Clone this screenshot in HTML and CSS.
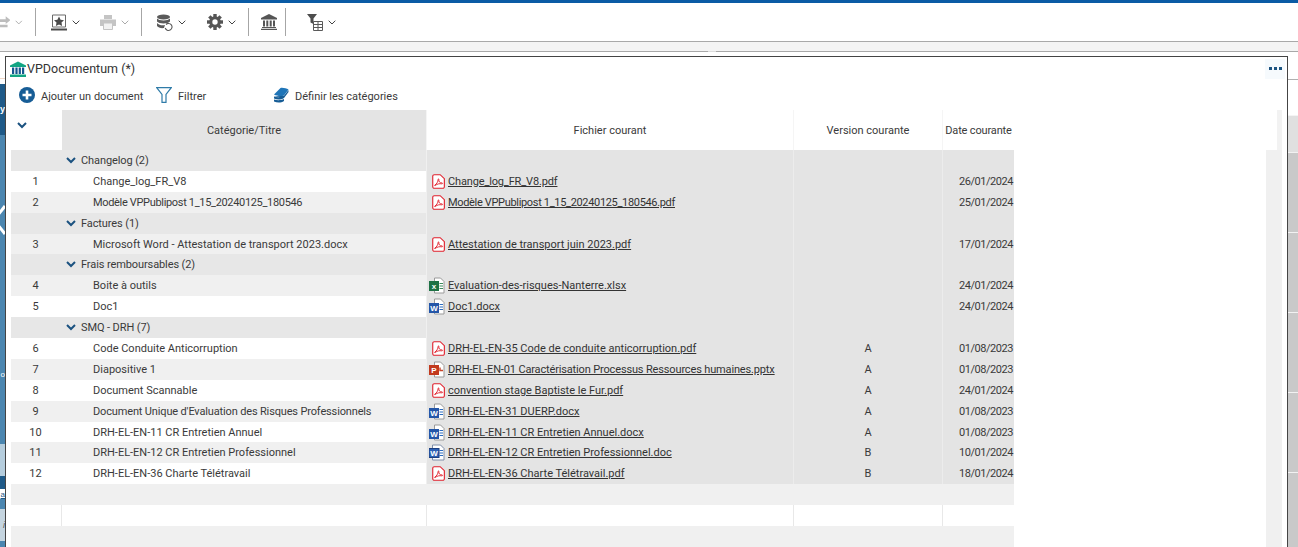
FILE: index.html
```html
<!DOCTYPE html>
<html lang="fr">
<head>
    <meta charset="UTF-8">
    <title>VPDocumentum</title>
    <link rel="stylesheet" href="styles.css">
</head>
<body>
    <svg class="sprites" width="0" height="0">
        <symbol id="i-pdf" viewBox="0 0 14 16">
            <path d="M2.5.7h6.3l4.5 4.3v8.6a1.7 1.7 0 0 1-1.7 1.7H2.5A1.7 1.7 0 0 1 .8 13.6V2.4A1.7 1.7 0 0 1 2.5.7z" fill="#fff" stroke="#e0202c" stroke-width="1.2"/>
            <path d="M3 11.8c2-1 3.4-3.4 3.6-6 .1-1.200 1-.8.8.3-.4 2 1 3.400 3.500 3.500.8.100.6 1-.4.9-2.400-.3-5-.1-6.800 1.800-.5.500-1.100.100-.7-.5z" fill="none" stroke="#e0202c" stroke-width="1"/>
        </symbol>
        <symbol id="i-xls" viewBox="0 0 16 17">
            <path d="M5.500 1h6l3.500 3.500V16h-9.500z" fill="#fff" stroke="#9a9a9a"/>
            <path d="M10.500 6.500H14M10.500 9H14M10.500 11.500H14" stroke="#3c8a5c"/>
            <rect x="0" y="4" width="10" height="10" fill="#1e7145"/>
            <text x="5" y="12" class="doc-letter">x</text>
        </symbol>
        <symbol id="i-docx" viewBox="0 0 16 17">
            <path d="M5.500 1h6l3.500 3.500V16h-9.500z" fill="#fff" stroke="#9a9a9a"/>
            <path d="M10.500 6.500H14M10.500 9H14M10.500 11.500H14" stroke="#2b6cc0"/>
            <rect x="0" y="5" width="10" height="10" fill="#2456a8"/>
            <text x="5" y="13" class="doc-letter">W</text>
        </symbol>
        <symbol id="i-doc" viewBox="0 0 16 17">
            <path d="M3.500 1h8l3.500 3.500V16H3.500z" fill="#fff" stroke="#7f8ea8"/>
            <path d="M10.500 6.500H14M10.500 9H14M10.500 11.500H14" stroke="#2b6cc0"/>
            <rect x="0" y="4.500" width="10" height="9" fill="#2e62b5" stroke="#1c3f80"/>
            <text x="5" y="12" class="doc-letter">W</text>
        </symbol>
        <symbol id="i-ppt" viewBox="0 0 16 17">
            <path d="M5.500 1h6l3.500 3.500V16h-9.500z" fill="#fff" stroke="#9a9a9a"/>
            <path d="M11 6.500v3h3" fill="none" stroke="#c8452a" stroke-width="1.400"/>
            <rect x="0" y="4" width="10" height="10" fill="#c2391d"/>
            <text x="5" y="12" class="doc-letter">P</text>
        </symbol>
        <symbol id="i-chev" viewBox="0 0 8 5">
            <path d="M.7.7 4 4l3.300-3.300" fill="none" stroke="currentColor" stroke-width="1"/>
        </symbol>
        <symbol id="i-fold" viewBox="0 0 10 7">
            <path d="M1 1l4 4 4-4" fill="none" stroke="currentColor" stroke-width="2"/>
        </symbol>
    </svg>

    <div class="topline"></div>
    <div class="toolbar">
        <div class="group group-first">
            <div class="tool">
                <svg class="ico-clip" width="11" height="16" viewBox="0 0 11 16"><path d="M0 5h6V2l5 4-5 4V8H0zM0 11h8v2.500H0z" fill="#bdbdbd"/></svg>
                <svg class="chev chev-off" width="8" height="5"><use href="#i-chev"/></svg>
            </div>
        </div>
        <div class="sep"></div>
        <div class="group">
            <div class="tool">
                <svg width="16" height="17" viewBox="0 0 16 17"><path d="M1.500 1h13v12h-13z" fill="#fff" stroke="#6a6a6a"/><path d="M8 2.500l1.600 3.200 3.400.5-2.500 2.400.6 3.400L8 10.400l-3.100 1.600.6-3.400L3 6.200l3.400-.5z" fill="#4a4a4a"/><path d="M0 15.500h16" stroke="#4a4a4a" stroke-width="2"/></svg>
                <svg class="chev" width="8" height="5"><use href="#i-chev"/></svg>
            </div>
            <div class="tool">
                <svg width="16" height="16" viewBox="0 0 16 16"><path d="M4 1h8v4H4zM0 5.500h16v6.500H0z" fill="#c4c4c4"/><path d="M3.500 9h9v6.500h-9z" fill="#f2f2f2" stroke="#c4c4c4"/></svg>
                <svg class="chev chev-off" width="8" height="5"><use href="#i-chev"/></svg>
            </div>
        </div>
        <div class="sep"></div>
        <div class="group">
            <div class="tool">
                <svg width="16" height="17" viewBox="0 0 16 17"><ellipse cx="6.500" cy="3" rx="6.500" ry="2.500" fill="#5a5a5a"/><path d="M0 4.500c2 2.500 11 2.500 13 0v3c-2 2.500-11 2.500-13 0zM0 9c2 2.500 6 2.500 8 2l-1 3c-3 .5-6-.5-7-2z" fill="#5a5a5a"/><path d="M9 10.500a3.500 3.500 0 1 1-.8 3.500" fill="#fff" stroke="#5a5a5a" stroke-width="1.100"/></svg>
                <svg class="chev" width="8" height="5"><use href="#i-chev"/></svg>
            </div>
            <div class="tool tool-wide">
                <svg width="16" height="16" viewBox="0 0 16 16"><g fill="#555"><circle cx="8" cy="8" r="5.800"/><rect x="6.300" y="0" width="3.400" height="16"/><rect x="6.300" y="0" width="3.400" height="16" transform="rotate(45 8 8)"/><rect x="6.300" y="0" width="3.400" height="16" transform="rotate(90 8 8)"/><rect x="6.300" y="0" width="3.400" height="16" transform="rotate(135 8 8)"/></g><circle cx="8" cy="8" r="2.700" fill="#fff"/></svg>
                <svg class="chev" width="8" height="5"><use href="#i-chev"/></svg>
            </div>
        </div>
        <div class="sep"></div>
        <div class="group group-bank">
            <svg width="16" height="16" viewBox="0 0 16 16"><path d="M8 0l8 4v1.500H0V4z" fill="#555"/><path d="M2 6.500h2v6H2zM5.300 6.500h2v6h-2zM8.700 6.500h2v6h-2zM12 6.500h2v6h-2zM1 13h14v1H1zM0 14.800h16V16H0z" fill="#555"/></svg>
        </div>
        <div class="sep"></div>
        <div class="group group-last">
            <div class="tool">
                <svg width="16" height="17" viewBox="0 0 16 17"><path d="M0 0h10L6.500 4.500V10l-3-1.500v-4z" fill="#4d4d4d"/><path d="M6.500 7.500h9v9h-9zM6.500 10.500h9M6.500 13.500h9M11 7.500v9" fill="#fff" stroke="#5a5a5a"/></svg>
                <svg class="chev" width="8" height="5"><use href="#i-chev"/></svg>
            </div>
        </div>
    </div>

    <div class="tabbar">
        <div class="tab tab-left"></div>
        <div class="tab-notch"></div>
        <div class="tab tab-right"></div>
    </div>

    <div class="main">
        <div class="strip-left">
            <div class="sl sl-white"></div>
            <div class="sl sl-dark">y</div>
            <div class="sl sl-mid sl-a"><svg width="5" height="36" viewBox="0 0 5 36"><path d="M5 4 -6 18 5 32" fill="none" stroke="#fff" stroke-width="3"/></svg></div>
            <div class="sl sl-mid sl-b"><span class="sl-small">o</span></div>
            <div class="sl sl-pale sl-c"></div>
            <div class="sl sl-dark sl-d"></div>
            <div class="sl sl-link">a</div>
            <div class="sl sl-mid sl-e"></div>
            <div class="sl sl-grey"><em>i</em></div>
            <div class="sl sl-mid sl-f"></div>
        </div>

        <div class="window">
            <div class="win-title">
                <svg class="win-ico" width="16" height="16" viewBox="0 0 16 16"><path d="M8 .5l8 4V6H0V4.500z" fill="#12a583"/><path d="M2 6.500h2.200v6.500H2zM5.400 6.500h2.200v6.500H5.400zM8.700 6.500h2.200v6.500H8.700zM12 6.500h2.200v6.500H12z" fill="#14568f"/><path d="M0 13.500h16V16H0z" fill="#12a583"/></svg>
                <span class="win-name">VPDocumentum (*)</span>
                <div class="win-more"><i></i><i></i><i></i></div>
            </div>

            <div class="actions">
                <div class="action action-add">
                    <svg width="16" height="16" viewBox="0 0 16 16"><circle cx="8" cy="8" r="8" fill="#175d96"/><path d="M8 3.500v9M3.500 8h9" stroke="#fff" stroke-width="2.600"/></svg>
                    <span>Ajouter un document</span>
                </div>
                <div class="action action-filter">
                    <svg width="16" height="16" viewBox="0 0 16 16"><path d="M.7.7h14.600L10 7.500v7.800H6V7.500z" fill="#fff" stroke="#2f7ba8" stroke-width="1.200"/></svg>
                    <span>Filtrer</span>
                </div>
                <div class="action">
                    <svg width="16" height="16" viewBox="0 0 16 16"><path d="M1 9.500c3 1 7 1 10-.5v2c-3 2-7 2-10 .5zM1 12.500c3 1 7 1 10-.5v2c-3 2-7 1.800-10 .5z" fill="#175d96"/><path d="M1 7.500L7.500 1c2.500-.5 6 .5 8 1.500L11 8.500c-3 1-7 .5-10-1z" fill="#1f75b8"/><path d="M1 9.500l10-.7 4.500-5.800v2L11 11z" fill="#175d96"/></svg>
                    <span>Définir les catégories</span>
                </div>
            </div>

            <div class="content">
                <div class="grid">
                    <div class="row row-head">
                        <div class="cell c-index"><svg class="fold" width="10" height="7"><use href="#i-fold"/></svg></div>
                        <div class="cell c-title">Catégorie/Titre</div>
                        <div class="cell c-file">Fichier courant</div>
                        <div class="cell c-ver">Version courante</div>
                        <div class="cell c-date">Date courante</div>
                    </div>

                    <div class="row row-group">
                        <div class="cell c-index"></div>
                        <div class="cell c-title"><svg class="fold" width="10" height="7"><use href="#i-fold"/></svg>Changelog (2)</div>
                        <div class="cell c-file"></div><div class="cell c-ver"></div><div class="cell c-date"></div>
                    </div>
                    <div class="row">
                        <div class="cell c-index">1</div>
                        <div class="cell c-title">Change_log_FR_V8</div>
                        <div class="cell c-file"><svg class="doc doc-pdf"><use href="#i-pdf"/></svg><a class="snug">Change_log_FR_V8.pdf</a></div>
                        <div class="cell c-ver"></div><div class="cell c-date">26/01/2024</div>
                    </div>
                    <div class="row">
                        <div class="cell c-index">2</div>
                        <div class="cell c-title tight">Modèle VPPublipost 1_15_20240125_180546</div>
                        <div class="cell c-file"><svg class="doc doc-pdf"><use href="#i-pdf"/></svg><a class="tight">Modèle VPPublipost 1_15_20240125_180546.pdf</a></div>
                        <div class="cell c-ver"></div><div class="cell c-date">25/01/2024</div>
                    </div>
                    <div class="row row-group">
                        <div class="cell c-index"></div>
                        <div class="cell c-title"><svg class="fold" width="10" height="7"><use href="#i-fold"/></svg>Factures (1)</div>
                        <div class="cell c-file"></div><div class="cell c-ver"></div><div class="cell c-date"></div>
                    </div>
                    <div class="row">
                        <div class="cell c-index">3</div>
                        <div class="cell c-title">Microsoft Word - Attestation de transport 2023.docx</div>
                        <div class="cell c-file"><svg class="doc doc-pdf"><use href="#i-pdf"/></svg><a>Attestation de transport juin 2023.pdf</a></div>
                        <div class="cell c-ver"></div><div class="cell c-date">17/01/2024</div>
                    </div>
                    <div class="row row-group">
                        <div class="cell c-index"></div>
                        <div class="cell c-title"><svg class="fold" width="10" height="7"><use href="#i-fold"/></svg>Frais remboursables (2)</div>
                        <div class="cell c-file"></div><div class="cell c-ver"></div><div class="cell c-date"></div>
                    </div>
                    <div class="row">
                        <div class="cell c-index">4</div>
                        <div class="cell c-title">Boite à outils</div>
                        <div class="cell c-file"><svg class="doc"><use href="#i-xls"/></svg><a>Evaluation-des-risques-Nanterre.xlsx</a></div>
                        <div class="cell c-ver"></div><div class="cell c-date">24/01/2024</div>
                    </div>
                    <div class="row">
                        <div class="cell c-index">5</div>
                        <div class="cell c-title">Doc1</div>
                        <div class="cell c-file"><svg class="doc"><use href="#i-docx"/></svg><a>Doc1.docx</a></div>
                        <div class="cell c-ver"></div><div class="cell c-date">24/01/2024</div>
                    </div>
                    <div class="row row-group">
                        <div class="cell c-index"></div>
                        <div class="cell c-title"><svg class="fold" width="10" height="7"><use href="#i-fold"/></svg>SMQ - DRH (7)</div>
                        <div class="cell c-file"></div><div class="cell c-ver"></div><div class="cell c-date"></div>
                    </div>
                    <div class="row">
                        <div class="cell c-index">6</div>
                        <div class="cell c-title">Code Conduite Anticorruption</div>
                        <div class="cell c-file"><svg class="doc doc-pdf"><use href="#i-pdf"/></svg><a>DRH-EL-EN-35 Code de conduite anticorruption.pdf</a></div>
                        <div class="cell c-ver">A</div><div class="cell c-date">01/08/2023</div>
                    </div>
                    <div class="row">
                        <div class="cell c-index">7</div>
                        <div class="cell c-title">Diapositive 1</div>
                        <div class="cell c-file"><svg class="doc"><use href="#i-ppt"/></svg><a class="snug">DRH-EL-EN-01 Caractérisation Processus Ressources humaines.pptx</a></div>
                        <div class="cell c-ver">A</div><div class="cell c-date">01/08/2023</div>
                    </div>
                    <div class="row">
                        <div class="cell c-index">8</div>
                        <div class="cell c-title">Document Scannable</div>
                        <div class="cell c-file"><svg class="doc doc-pdf"><use href="#i-pdf"/></svg><a>convention stage Baptiste le Fur.pdf</a></div>
                        <div class="cell c-ver">A</div><div class="cell c-date">24/01/2024</div>
                    </div>
                    <div class="row">
                        <div class="cell c-index">9</div>
                        <div class="cell c-title snug">Document Unique d'Evaluation des Risques Professionnels</div>
                        <div class="cell c-file"><svg class="doc"><use href="#i-docx"/></svg><a>DRH-EL-EN-31 DUERP.docx</a></div>
                        <div class="cell c-ver">A</div><div class="cell c-date">01/08/2023</div>
                    </div>
                    <div class="row">
                        <div class="cell c-index">10</div>
                        <div class="cell c-title">DRH-EL-EN-11 CR Entretien Annuel</div>
                        <div class="cell c-file"><svg class="doc"><use href="#i-docx"/></svg><a>DRH-EL-EN-11 CR Entretien Annuel.docx</a></div>
                        <div class="cell c-ver">A</div><div class="cell c-date">01/08/2023</div>
                    </div>
                    <div class="row">
                        <div class="cell c-index">11</div>
                        <div class="cell c-title">DRH-EL-EN-12 CR Entretien Professionnel</div>
                        <div class="cell c-file"><svg class="doc"><use href="#i-doc"/></svg><a>DRH-EL-EN-12 CR Entretien Professionnel.doc</a></div>
                        <div class="cell c-ver">B</div><div class="cell c-date">10/01/2024</div>
                    </div>
                    <div class="row">
                        <div class="cell c-index">12</div>
                        <div class="cell c-title">DRH-EL-EN-36 Charte Télétravail</div>
                        <div class="cell c-file"><svg class="doc doc-pdf"><use href="#i-pdf"/></svg><a>DRH-EL-EN-36 Charte Télétravail.pdf</a></div>
                        <div class="cell c-ver">B</div><div class="cell c-date">18/01/2024</div>
                    </div>

                    <div class="row row-blank"><div class="cell c-index"></div><div class="cell c-title"></div><div class="cell c-file"></div><div class="cell c-ver"></div><div class="cell c-date"></div></div>
                    <div class="row row-blank"><div class="cell c-index"></div><div class="cell c-title"></div><div class="cell c-file"></div><div class="cell c-ver"></div><div class="cell c-date"></div></div>
                    <div class="row row-blank"><div class="cell c-index"></div><div class="cell c-title"></div><div class="cell c-file"></div><div class="cell c-ver"></div><div class="cell c-date"></div></div>
                </div>
                <div class="scroll">
                    <div class="scroll-head"></div>
                    <div class="scroll-body"></div>
                </div>
            </div>
        </div>

        <div class="strip-right">
            <div class="sr-top"></div>
            <div class="sr-gap"></div>
            <div class="sr-head"></div>
            <div class="sr-body"></div>
        </div>
    </div>
</body>
</html>
```

FILE: styles.css
```css
html, body {
    height: 100%;
}
body {
    margin: 0;
    height: 547px;
    overflow: hidden;
    display: flex;
    flex-direction: column;
    font-family: Roboto, "Noto Sans", sans-serif;
    font-size: 11px;
    color: #3a3a3a;
    background: #fff;
}
.sprites {
    position: absolute;
}
.doc-letter {
    font-family: "Liberation Sans", sans-serif;
    font-size: 8px;
    font-weight: bold;
    fill: #fff;
    text-anchor: middle;
}
.snug {
    letter-spacing: -.15px;
}
.tight {
    letter-spacing: -.33px;
}

/* top bar */
.topline {
    height: 3px;
    background: #0a5ba5;
}
.toolbar {
    height: 38px;
    display: flex;
    align-items: center;
    border-bottom: 1px solid #a9a9a9;
}
.group {
    display: flex;
    align-items: center;
    gap: 20px;
    padding: 0 12px 0 15px;
}
.group-first {
    padding-left: 0;
}
.group-bank {
    padding: 0 8px 0 12px;
}
.group-last {
    padding-left: 21px;
}
.tool {
    display: flex;
    align-items: center;
    gap: 5px;
    width: 29px;
    color: #444;
}
.group-first .tool {
    width: 23px;
    gap: 5px;
}
.tool-wide {
    margin-left: 1px;
}
.chev-off {
    color: #aaa;
}
.sep {
    width: 1px;
    height: 28px;
    background: #a6a6a6;
}

/* tab line */
.tabbar {
    display: flex;
    height: 10px;
    margin-bottom: 4px;
    flex: none;
    background: #f4f4f4;
}
.tab {
    border-bottom: 1px solid #a8a8a8;
}
.tab-left {
    width: 708px;
}
.tab-notch {
    width: 8px;
    border-bottom: 1px solid #dcdcdc;
}
.tab-right {
    flex: 1;
}

.main {
    flex: 1;
    display: flex;
    min-height: 0;
}

/* what shows of the page behind the window */
.strip-left {
    width: 5px;
    flex: none;
    display: flex;
    flex-direction: column;
    overflow: hidden;
    color: #fff;
    font-family: "Liberation Sans", sans-serif;
}
.sl {
    display: flex;
    justify-content: flex-end;
    align-items: center;
    white-space: nowrap;
}
.sl-white {
    height: 28px;
    background: #fff;
    box-shadow: inset 0 -5px 0 #fff, inset 0 -6px 0 #f0d8c8;
}
.sl-dark {
    height: 51px;
    background: #1f5a88;
    font-size: 9px;
    font-weight: bold;
}
.sl-mid {
    background: #4b86b0;
}
.sl-a {
    height: 170px;
}
.sl-b {
    height: 140px;
}
.sl-small {
    font-size: 8px;
}
.sl-pale {
    background: #b5cddd;
}
.sl-c {
    height: 32px;
}
.sl-d {
    height: 13px;
}
.sl-link {
    height: 10px;
    background: #fff;
    color: #1f5a88;
    font-size: 8px;
    text-decoration: underline;
}
.sl-e {
    height: 10px;
}
.sl-grey {
    height: 32px;
    background: #c5d5e0;
    color: #555;
    font-size: 9px;
}
.sl-f {
    height: 6px;
}
.strip-right {
    width: 10px;
    flex: none;
    display: flex;
    flex-direction: column;
}
.sr-top {
    height: 23px;
    border-bottom: 1px solid #b0b0b0;
}
.sr-gap {
    height: 35px;
}
.sr-head {
    height: 37px;
    background: #e0e0e0;
    box-shadow: inset 0 20px 0 -19px #f4f4f4;
}
.sr-body {
    flex: 1;
    background: repeating-linear-gradient(#f2f2f2 0, #f2f2f2 1px, #c9c9c9 1px, #c9c9c9 80px);
}

/* document window */
.window {
    flex: 1;
    min-width: 0;
    display: flex;
    flex-direction: column;
    border: 1px solid #444;
    border-bottom: 0;
    background: #fff;
}
.win-title {
    height: 23px;
    display: flex;
    align-items: center;
    padding-left: 4px;
    gap: 1px;
    flex: none;
}
.win-name {
    font-size: 12.5px;
    color: #333;
    flex: 1;
}
.win-more {
    width: 20px;
    height: 20px;
    margin-right: 2px;
    display: flex;
    justify-content: center;
    align-items: center;
    gap: 2px;
    background: #f6fafd;
}
.win-more i {
    width: 3px;
    height: 3px;
    background: #1c5482;
}
.actions {
    height: 30px;
    display: flex;
    align-items: center;
    padding-left: 13px;
    flex: none;
}
.action {
    display: flex;
    align-items: center;
    gap: 6px;
}
.action span {
    padding-top: 2px;
}
.action-add {
    width: 137px;
}
.action-filter {
    width: 117px;
}
.content {
    flex: 1;
    min-height: 0;
    display: flex;
    justify-content: space-between;
    padding: 0 5px;
}

/* document list */
.grid {
    width: 1003px;
    flex: none;
}
.row {
    display: grid;
    grid-template-columns: 51px 364px 367px 149px 72px;
    height: 20.9px;
    background: #fff;
}
.row:nth-child(even) {
    background: #f0f0f0;
}
.cell {
    display: flex;
    align-items: center;
    white-space: nowrap;
    min-width: 0;
    box-sizing: border-box;
}
.c-index {
    justify-content: center;
    padding-right: 2px;
}
.c-title {
    padding-left: 31px;
}
.c-file {
    padding-left: 5px;
    background: #e4e4e4;
    border-left: 1px solid #f0f0f0;
}
.c-ver {
    justify-content: center;
    background: #e4e4e4;
    border-left: 1px solid #ececec;
}
.c-date {
    justify-content: flex-end;
    padding-right: 1px;
    letter-spacing: -.45px;
    background: #e4e4e4;
    border-left: 1px solid #ececec;
}
.c-file a {
    text-decoration: underline;
    color: #333;
}
.doc {
    width: 16px;
    height: 17px;
    margin-left: -3px;
    margin-right: 3px;
    flex: none;
}
.doc-pdf {
    width: 13px;
    height: 15px;
    margin-left: 0;
}

.row-head {
    height: 40px;
    background: #fff;
}
.row-head .c-index {
    background: #fff;
    justify-content: flex-start;
    padding: 0 0 9px 6px;
}
.row-head .c-title {
    background: #e4e4e4;
    justify-content: center;
    padding-left: 0;
}
.row-head .c-file,
.row-head .c-ver,
.row-head .c-date {
    background: #fff;
    justify-content: center;
    padding-left: 0;
    padding-right: 0;
    border-left-color: #f5f5f5;
}
.row-head .c-date {
    letter-spacing: -.15px;
}
.fold {
    color: #1b5280;
}
.row-group,
.row-group:nth-child(even) {
    background: #e7e7e7;
}
.row-group .c-title {
    padding-left: 4px;
    letter-spacing: -.1px;
}
.row-group .fold {
    margin-right: 5px;
}
.row-blank .c-file,
.row-blank .c-ver,
.row-blank .c-date {
    background: none;
    border-left-color: transparent;
}
.row-blank:nth-child(odd) .cell {
    border-left: 1px solid #e8e8e8;
}
.row-blank:nth-child(odd) .c-index {
    border-left: 0;
    border-right: 1px solid #e8e8e8;
}
.row-blank:nth-child(odd) .c-title {
    border-left: 0;
}

/* scrollbar lane */
.scroll {
    width: 16px;
    display: flex;
    flex-direction: column;
    align-items: flex-end;
}
.scroll-head {
    width: 5px;
    height: 40px;
    background: #f2f2f2;
}
.scroll-body {
    width: 100%;
    flex: 1;
    background: #f0f0f0;
}
```
